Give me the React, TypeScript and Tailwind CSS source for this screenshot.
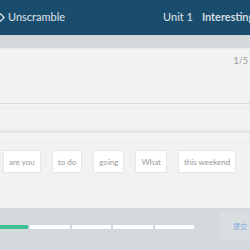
import { useState } from "react";

const words = ["are you", "to do", "going", "What", "this weekend"];

export default function App() {
  const [step] = useState(1);

  return (
    <div className="w-[250px] h-[250px] overflow-hidden flex flex-col bg-[#f2f2f2] font-['Lato','Noto_Sans_CJK_SC',sans-serif]">
      {/* Header */}
      <div className="h-[35px] shrink-0 bg-[#1a4d6d] flex items-center text-white/85 text-[11px] whitespace-nowrap overflow-hidden">
        <svg className="w-[11px] h-[11px] -ml-[5px] mr-[2px] shrink-0" viewBox="0 0 12 12" fill="none" stroke="currentColor" strokeWidth={1.4}>
          <path d="M2 6l4-4 4 4-4 4z" />
        </svg>
        <span className="shrink-0">Unscramble</span>
        <span className="shrink-0 ml-[98px]">Unit 1</span>
        <span className="shrink-0 ml-[9px] font-semibold">Interesting things</span>
      </div>
      <div className="h-[13px] shrink-0 bg-[#d5d9dc]" />

      {/* Question area */}
      <div className="h-[160px] shrink-0 flex flex-col border-t border-[#e8e8e8]">
        <div className="h-[55px] shrink-0 border-b border-[#dcdcdc] flex justify-end pt-[7px] pr-[2px]">
          <span className="text-[9px] leading-none text-[#999]">{step}/5</span>
        </div>
        <div className="h-[5px] shrink-0 border-b border-[#e9e9e9]" />
        <div className="h-[21px] shrink-0" />
        <div className="h-[3px] shrink-0 bg-[#e6e6e6]" />
        <div className="h-[10px] shrink-0 border-b border-[#e9e9e9]" />
        <div className="flex items-center gap-[11px] pl-[3px] pt-[7px] whitespace-nowrap">
          {words.map((w) => (
            <span
              key={w}
              className="shrink-0 h-[23px] px-[5px] flex items-center bg-white border border-[#e6e6e6] text-[8px] text-[#999]"
            >
              {w}
            </span>
          ))}
        </div>
      </div>

      {/* Footer */}
      <div className="flex-1 bg-[#d3d9dc] flex items-center">
        <div className="w-[194px] h-[4px] flex gap-[2px] -mt-[4px]">
          <div className="w-[28px] bg-[#3dbf8f]" />
          <div className="flex-1 bg-white" />
          <div className="flex-1 bg-white" />
          <div className="flex-1 bg-white" />
          <div className="flex-1 bg-white" />
        </div>
        <div className="ml-auto h-[26px] w-[30px] bg-[#d9dfe1] flex items-center justify-end pr-[3px] -mt-[6px]">
          <span className="text-[7px] leading-none text-[#7fa9e0]">提交</span>
        </div>
      </div>
    </div>
  );
}
